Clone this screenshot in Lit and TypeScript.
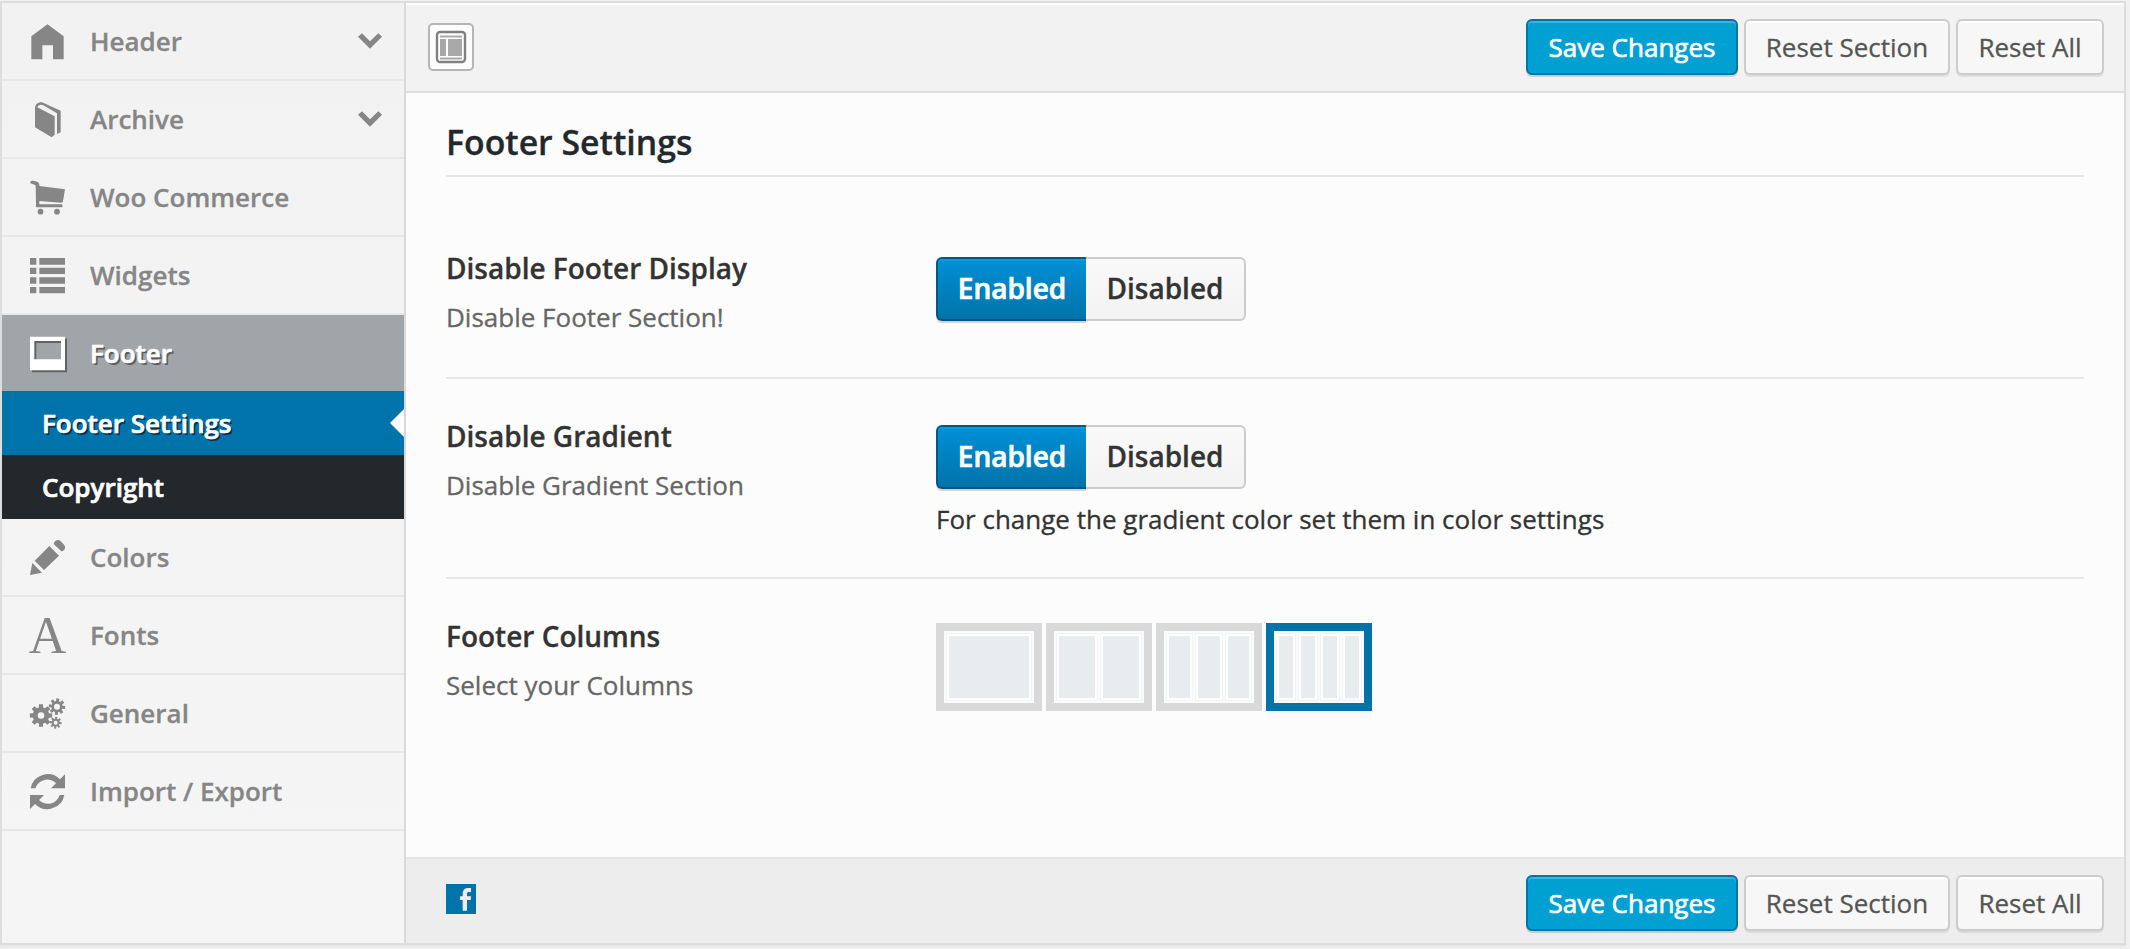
import { LitElement, html, svg, css, nothing } from "lit";
import { customElement, property } from "lit/decorators.js";

const gear = (cx: number, cy: number, outer: number, inner: number, hole: number, turn = 0) => {
  const points: string[] = [];
  const teeth = 8;
  for (let i = 0; i < teeth; i++) {
    const mid = (i / teeth) * Math.PI * 2 + turn;
    for (const [offset, radius] of [[-0.26, inner], [-0.18, outer], [0.18, outer], [0.26, inner]]) {
      points.push(`${(cx + Math.cos(mid + offset) * radius).toFixed(1)} ${(cy + Math.sin(mid + offset) * radius).toFixed(1)}`);
    }
  }
  return `M${points.join("L")}ZM${cx - hole} ${cy}a${hole} ${hole} 0 1 0 ${hole * 2} 0a${hole} ${hole} 0 1 0 ${-hole * 2} 0Z`;
};

const icons: Record<string, unknown> = {
  home: svg`<path d="M52.5 .5 101 37V106H69V64H37V106H4V37Z"/>`,
  book: svg`<path d="M15 19C15 8 23 1 34 1 37 1 39 2 41 3L92 26V91L81 96V34L40 10C32 6 24 10 22 16L74 43V98L65 106 15 76Z"/>`,
  cart: svg`<path d="M5 2.500H9C18 4 28 6 28 14V18L105 28 99 64C98 67 96 68 93 68L28 63V73H97V82H18V68L17 18C16 14 13 13 4 11-1 9 0 3 5 2.500Z"/><circle cx="31.500" cy="95" r="8.500"/><circle cx="81" cy="95" r="8.500"/>`,
  list: svg`<path d="M0 0H19V20H0ZM28 0H105V20H28ZM0 29H19V48H0ZM28 29H105V48H28ZM0 58H19V77H0ZM28 58H105V77H28ZM0 87H19V106H0ZM28 87H105V106H28Z"/>`,
  panel: svg`<path d="M0 2H105V103H0ZM13 15V70H93V15Z"/>`,
  pencil: svg`<path d="M58 18 87 47 42 90 14 62ZM7 69 36 98 0 105ZM71 12C73 2 85-4 92 4L102 14C110 23 102 34 94 34Z"/>`,
  letter: svg`<text class="letter" x="52.500" y="105" text-anchor="middle">A</text>`,
  gears: svg`<path d="${gear(33, 58.5, 34, 25, 10)}"/><path d="${gear(81, 32, 25, 17, 9, 0.1)}"/><path d="${gear(77, 80, 18, 12, 6, 0.1)}"/>`,
  refresh: svg`<path d="M2 43A52 52 0 0 1 90 16L105 1V43H63L78 28A37 37 0 0 0 16 43Z"/><path transform="rotate(180 52.500 53)" d="M2 43A52 52 0 0 1 90 16L105 1V43H63L78 28A37 37 0 0 0 16 43Z"/>`,
};

@customElement("option-menu")
class OptionMenu extends LitElement {
  static styles = css`
    :host { display: block; width: 402px; border-right: 2px solid #d9d9d9; background: linear-gradient(#f2f2f2, #f5f5f5); }
    .item { box-sizing: border-box; height: 78px; border-bottom: 2px solid #e7e7e7; display: flex; align-items: center; padding: 0 22px 0 28px; color: #868686; font-weight: 600; font-size: 26px; -webkit-text-stroke: .3px currentColor; }
    .label { flex: 1; margin-left: 25px; line-height: 36px; }
    .icon { width: 35px; height: 35px; fill: currentColor; fill-rule: evenodd; overflow: visible; flex: none; -webkit-text-stroke: 0; }
    .letter { font: 156px "Liberation Serif", serif; }
    .chevron { width: 24px; height: 16px; fill: currentColor; }
    .active { height: 76px; border: 0; background: #a0a5a9; color: #fff; text-shadow: 2px 2px #5a5d60; -webkit-text-stroke-width: .7px; }
    .active .icon { filter: drop-shadow(2px 2px 0 #5f6367); }
    .sub { height: 64px; line-height: 64px; padding-left: 40px; font-size: 26px; font-weight: 600; color: #fff; background: #23282d; -webkit-text-stroke: .7px #fff; }
    .current { background: #0073aa; text-shadow: 2px 2px #04334d; display: flex; align-items: center; justify-content: space-between; }
    .notch { border: 14px solid transparent; border-left: 0; border-right-color: #fcfcfc; }
  `;
  item(icon: string, label: string, expandable = false, active = false) {
    return html`<div class="item ${active ? "active" : ""}">
      <svg class="icon" viewBox="0 0 105 105">${icons[icon]}</svg>
      <span class="label">${label}</span>
      ${expandable ? html`<svg class="chevron" viewBox="0 0 72 46"><path d="M0 10 12 0 36 24 61 0 72 10 36 46Z"/></svg>` : nothing}
    </div>`;
  }
  render() {
    return html`
      ${this.item("home", "Header", true)}
      ${this.item("book", "Archive", true)}
      ${this.item("cart", "Woo Commerce")}
      ${this.item("list", "Widgets")}
      ${this.item("panel", "Footer", false, true)}
      <div class="sub current">Footer Settings<span class="notch"></span></div>
      <div class="sub">Copyright</div>
      ${this.item("pencil", "Colors")}
      ${this.item("letter", "Fonts")}
      ${this.item("gears", "General")}
      ${this.item("refresh", "Import / Export")}
    `;
  }
}

@customElement("action-buttons")
class ActionButtons extends LitElement {
  static styles = css`
    :host { display: flex; gap: 6px; }
    .button { box-sizing: border-box; height: 56px; border: 2px solid #ccc; border-radius: 6px; background: #f7f7f7; color: #555; font: 26px/52px "Open Sans", sans-serif; padding: 0; text-align: center; box-shadow: inset 0 2px #fff, 0 2px rgba(0,0,0,.08); -webkit-text-stroke: .3px currentColor; }
    .save { width: 212px; background: #00a0d2; border-color: #0073aa; color: #fff; box-shadow: inset 0 2px rgba(120,200,230,.5), 0 2px rgba(0,0,0,.15); -webkit-text-stroke-width: .7px; }
    .section { width: 206px; }
    .all { width: 148px; }
  `;
  render() {
    return html`<button class="button save">Save Changes</button><button class="button section">Reset Section</button><button class="button all">Reset All</button>`;
  }
}

@customElement("switch-field")
class SwitchField extends LitElement {
  static styles = css`
    :host { display: flex; height: 64px; font-size: 28px; line-height: 58px; font-weight: 600; text-align: center; }
    .on { box-sizing: border-box; width: 150px; border: 2px solid #005684; border-right: 0; border-radius: 6px 0 0 6px; background: linear-gradient(#0090d6, #0073aa); color: #fff; box-shadow: inset 0 2px #009cf0, 0 2px #d3d3d3; -webkit-text-stroke: .7px #fff; }
    .off { box-sizing: border-box; width: 160px; border: 2px solid #ccc; border-left: 0; border-radius: 0 6px 6px 0; background: linear-gradient(#f9f9f9, #f3f3f3); color: #333; -webkit-text-stroke: .3px #333; }
  `;
  render() {
    return html`<div class="on">Enabled</div><div class="off">Disabled</div>`;
  }
}

@customElement("column-tile")
class ColumnTile extends LitElement {
  static styles = css`
    :host { display: block; box-sizing: border-box; width: 106px; height: 88px; border: 8px solid #d9d9d9; background: #fafbfb; padding: 3px; }
    :host([selected]) { border-color: #0073aa; box-shadow: 0 8px #f9f9f9; }
    .columns { display: flex; height: 66px; gap: 4px; }
    .column { flex: 1; box-sizing: border-box; background: #e7edef; border: 2px solid #fff; box-shadow: 0 0 0 1px #f2f5f6; }
  `;
  @property({ type: Number }) count = 1;
  render() {
    return html`<div class="columns">${Array.from({ length: this.count }, () => html`<span class="column"></span>`)}</div>`;
  }
}

@customElement("app-root")
class AppRoot extends LitElement {
  static styles = css`
    :host { display: block; box-sizing: border-box; height: 949px; padding: 1px 4px 4px 0; background: #f1f1f1; font-family: "Open Sans", sans-serif; overflow: hidden; }
    .panel { box-sizing: border-box; height: 944px; display: flex; border: 2px solid #ddd; box-shadow: 0 2px 2px rgba(0,0,0,.05); background: #fcfcfc; }
    .main { flex: 1; display: flex; flex-direction: column; }
    .toolbar { box-sizing: border-box; height: 90px; display: flex; justify-content: space-between; align-items: flex-start; padding: 16px 20px 0 22px; background: #f2f2f2; border-bottom: 2px solid #ddd; box-shadow: inset 0 2px #fcfcfc; }
    .expand { box-sizing: border-box; width: 46px; height: 48px; margin-top: 4px; border: 2px solid #b5b5b5; border-radius: 5px; background: #fcfcfc; display: grid; place-items: center; }
    .expand svg { width: 32px; height: 34px; }
    .content { flex: 1; padding: 0 40px; -webkit-text-stroke: .3px currentColor; }
    .title { margin: 0; height: 84px; box-sizing: border-box; border-bottom: 2px solid #e5e5e5; padding-top: 26px; font-size: 33.800px; line-height: 46px; font-weight: 600; color: #23282d; }
    .field { display: flex; box-sizing: border-box; border-bottom: 2px solid #e7e7e7; color: #333; }
    .first { height: 202px; padding-top: 80px; }
    .second { height: 200px; padding-top: 46px; }
    .third { border: 0; padding-top: 44px; }
    .heading { width: 490px; }
    .name { font-size: 28px; line-height: 40px; font-weight: 600; margin-top: -9px; }
    .third .name { margin-top: -7px; }
    .desc { font-size: 26px; line-height: 36px; color: #666; margin-top: 11px; }
    .note { font-size: 26px; line-height: 36px; margin-top: 12px; }
    .tiles { display: flex; gap: 4px; }
    .footer { box-sizing: border-box; height: 86px; display: flex; align-items: flex-start; justify-content: space-between; padding: 16px 20px 0 40px; background: #ededed; border-top: 2px solid #e5e5e5; }
    .facebook { width: 30px; height: 30px; margin-top: 9px; }
  `;
  render() {
    return html`<div class="panel">
      <option-menu></option-menu>
      <div class="main">
        <div class="toolbar">
          <div class="expand"><svg viewBox="0 0 32 34" fill="none">
            <rect x="2" y="2" width="28" height="30" rx="3" fill="#fff" stroke="#808080" stroke-width="2.400"/>
            <path d="M5 6.500H27M5 28.500H27" stroke="#aaa" stroke-width="2"/>
            <path d="M5 9H11V26H5ZM13 9H27V26H13Z" fill="#a8a8a8"/></svg></div>
          <action-buttons></action-buttons>
        </div>
        <div class="content">
          <h3 class="title">Footer Settings</h3>
          <div class="field first">
            <div class="heading"><div class="name">Disable Footer Display</div><div class="desc">Disable Footer Section!</div></div>
            <switch-field></switch-field>
          </div>
          <div class="field second">
            <div class="heading"><div class="name">Disable Gradient</div><div class="desc">Disable Gradient Section</div></div>
            <div><switch-field></switch-field><div class="note">For change the gradient color set them in color settings</div></div>
          </div>
          <div class="field third">
            <div class="heading"><div class="name">Footer Columns</div><div class="desc">Select your Columns</div></div>
            <div class="tiles"><column-tile count="1"></column-tile><column-tile count="2"></column-tile><column-tile count="3"></column-tile><column-tile count="4" selected></column-tile></div>
          </div>
        </div>
        <div class="footer">
          <svg class="facebook" viewBox="0 0 90 90"><path fill="#0073aa" d="M0 0H90V90H0Z"/><path fill="#ededed" d="M50 80V48H42V37H50V30C50 17 57 12 67 12H75V24H69C65 24 63 26 63 30V37H75L74 48H63V80Z"/></svg>
          <action-buttons></action-buttons>
        </div>
      </div>
    </div>`;
  }
}
